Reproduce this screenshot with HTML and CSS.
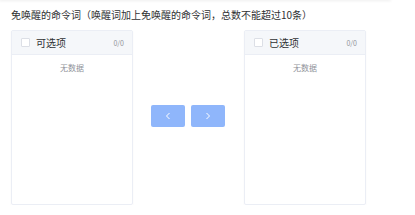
FILE: index.html
```html
<!DOCTYPE html>
<html lang="zh">
  <head>
    <meta charset="UTF-8">
    <title>命令词</title>
    <link rel="stylesheet" href="styles.css">
  </head>
  <body>
    <div class="top-bar"></div>
    <div class="field-label">免唤醒的命令词（唤醒词加上免唤醒的命令词，总数不能超过10条）</div>

    <div class="transfer">
      <div class="transfer-panel">
        <div class="panel-header">
          <span class="checkbox"></span>
          <span class="panel-title">可选项</span>
          <span class="panel-count">0/0</span>
        </div>
        <div class="panel-body">
          <p class="empty-text">无数据</p>
        </div>
      </div>

      <div class="transfer-buttons">
        <button class="move-btn" disabled>
          <svg width="6" height="8" viewBox="0 0 6 8" fill="none">
            <path d="M4.5 1 L1.5 4 L4.5 7" stroke="#fff" stroke-width="1"/>
          </svg>
        </button>
        <button class="move-btn" disabled>
          <svg width="6" height="8" viewBox="0 0 6 8" fill="none">
            <path d="M1.5 1 L4.5 4 L1.5 7" stroke="#fff" stroke-width="1"/>
          </svg>
        </button>
      </div>

      <div class="transfer-panel">
        <div class="panel-header">
          <span class="checkbox"></span>
          <span class="panel-title">已选项</span>
          <span class="panel-count">0/0</span>
        </div>
        <div class="panel-body">
          <p class="empty-text">无数据</p>
        </div>
      </div>
    </div>
  </body>
</html>
```

FILE: styles.css
```css
html {
  background-color: #ffffff;
}
body {
  margin: 0;
  font-family: "Noto Sans CJK SC", "Noto Sans", sans-serif;
  color: #303133;
  overflow: hidden;
}
.top-bar {
  width: 390px;
  height: 0;
  box-shadow: 0 0 3px 1px rgba(0, 0, 0, 0.08);
}
.field-label {
  margin: 8px 0 0 11px;
  font-size: 10px;
  line-height: 14px;
  color: #303133;
}
.transfer {
  display: flex;
  align-items: center;
  margin: 8px 0 0 11px;
}
.transfer-panel {
  width: 120px;
  height: 173px;
  border: 1px solid #ebeef5;
  border-radius: 2px;
  box-shadow: 0 1px 2px rgba(0, 0, 0, 0.04);
  display: flex;
  flex-direction: column;
}
.panel-header {
  height: 23px;
  background-color: #f5f7fa;
  border-bottom: 1px solid #ebeef5;
  display: flex;
  align-items: center;
  padding: 0 8px 0 9px;
}
.checkbox {
  width: 7px;
  height: 7px;
  border: 1px solid #dcdfe6;
  border-radius: 1px;
  background-color: #ffffff;
}
.panel-title {
  margin-left: 6px;
  font-size: 10px;
  color: #303133;
  flex: 1;
}
.panel-count {
  font-size: 7px;
  color: #909399;
}
.panel-body {
  flex: 1;
}
.empty-text {
  margin: 7px 0 0;
  text-align: center;
  font-size: 8px;
  line-height: 12px;
  color: #909399;
}
.transfer-buttons {
  display: flex;
  gap: 6px;
  margin: 0 19px 2px 18px;
  padding-bottom: 2px;
}
.move-btn {
  width: 34px;
  height: 22px;
  border: none;
  border-radius: 2px;
  background-color: #8fb6fb;
  display: flex;
  align-items: center;
  justify-content: center;
  padding: 0;
  cursor: not-allowed;
}
```
